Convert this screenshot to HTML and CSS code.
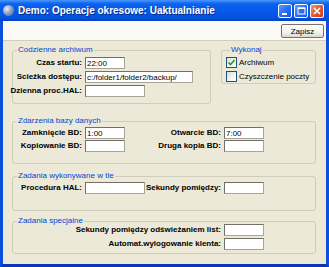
FILE: index.html
```html
<!DOCTYPE html>
<html lang="pl">

<head>
    <meta charset="UTF-8">
    <title>Demo: Operacje okresowe: Uaktualnianie</title>
    <link rel="stylesheet" href="styles.css">
</head>

<body>
    <div class="window">
        <div class="titlebar">
            <span class="app-icon"></span>
            <span class="title">Demo: Operacje okresowe: Uaktualnianie</span>
            <div class="controls">
                <span class="ctl">
                    <svg width="12" height="12" viewBox="0 0 12 12"><rect x="3" y="8" width="5" height="2" fill="#fff"/></svg>
                </span>
                <span class="ctl">
                    <svg width="12" height="12" viewBox="0 0 12 12"><rect x="3" y="3" width="7" height="6" fill="none" stroke="#fff" stroke-width="1"/><rect x="3" y="2.5" width="7" height="1.5" fill="#fff"/></svg>
                </span>
                <span class="ctl ctl-close">
                    <svg width="12" height="12" viewBox="0 0 12 12"><path d="M3 3 L9 9 M9 3 L3 9" stroke="#fff" stroke-width="1.6"/></svg>
                </span>
            </div>
        </div>

        <div class="frame">
            <div class="toolbar">
                <button class="btn">Zapisz</button>
            </div>

            <div class="panel">
                <div class="top-row">
                    <fieldset class="group group-daily">
                        <legend>Codzienne archiwum</legend>
                        <div class="fields cols-daily">
                            <label>Czas startu:</label>
                            <input class="w40" type="text" value="22:00">
                            <label>Scieżka dostępu:</label>
                            <input class="w108" type="text" value="c:/folder1/folder2/backup/">
                            <label>Dzienna proc.HAL:</label>
                            <input class="w60" type="text" value="">
                        </div>
                    </fieldset>

                    <fieldset class="group group-run">
                        <legend>Wykonaj</legend>
                        <div class="checks">
                            <div class="check-row">
                                <span class="box">
                                    <svg width="9" height="9" viewBox="0 0 9 9"><path d="M1.5 4.5 L3.5 6.5 L7.5 2" fill="none" stroke="#21a121" stroke-width="1.6"/></svg>
                                </span>
                                <span>Archiwum</span>
                            </div>
                            <div class="check-row">
                                <span class="box"></span>
                                <span>Czyszczenie poczty</span>
                            </div>
                        </div>
                    </fieldset>
                </div>

                <fieldset class="group group-db">
                    <legend>Zdarzenia bazy danych</legend>
                    <div class="fields cols-db">
                        <label>Zamknięcie BD:</label>
                        <input class="w40" type="text" value="1:00">
                        <label>Otwarcie BD:</label>
                        <input class="w40" type="text" value="7:00">
                        <label>Kopiowanie BD:</label>
                        <input class="w40" type="text" value="">
                        <label>Druga kopia BD:</label>
                        <input class="w40" type="text" value="">
                    </div>
                </fieldset>

                <fieldset class="group group-bg">
                    <legend>Zadania wykonywane w tle</legend>
                    <div class="fields cols-bg">
                        <label>Procedura HAL:</label>
                        <input class="w60" type="text" value="">
                        <label>Sekundy pomiędzy:</label>
                        <input class="w40" type="text" value="">
                    </div>
                </fieldset>

                <fieldset class="group group-special">
                    <legend>Zadania specjalne</legend>
                    <div class="fields cols-special">
                        <label>Sekundy pomiędzy odświeżaniem list:</label>
                        <input class="w40" type="text" value="">
                        <label>Automat.wylogowanie klenta:</label>
                        <input class="w40" type="text" value="">
                    </div>
                </fieldset>
            </div>
        </div>
    </div>
</body>

</html>
```

FILE: styles.css
```css
* {
    box-sizing: border-box;
    margin: 0;
    padding: 0;
}

body {
    width: 329px;
    height: 267px;
    overflow: hidden;
    font-family: "Liberation Sans", Arial, sans-serif;
    font-size: 8px;
    color: #000;
    background-color: #0a50dc;
}

.window {
    display: flex;
    flex-direction: column;
    height: 267px;
}

/* title bar */

.titlebar {
    height: 21px;
    display: flex;
    align-items: center;
    padding: 0 5px 0 3px;
    background: linear-gradient(#4a97fc 0%, #0b62ee 18%, #0558e8 55%, #0452df 85%, #0340c4 100%);
}

.app-icon {
    width: 11px;
    height: 11px;
    border-radius: 50%;
    background: radial-gradient(circle at 35% 35%, #e8eef8 0%, #8ea3c4 45%, #3d5a8c 100%);
}

.title {
    margin-left: 4px;
    color: #fff;
    font-weight: bold;
    font-size: 10px;
    white-space: nowrap;
    text-shadow: 1px 1px 0 #0b2a86;
}

.controls {
    margin-left: auto;
    display: flex;
    gap: 2px;
}

.ctl {
    width: 14px;
    height: 14px;
    display: flex;
    align-items: center;
    justify-content: center;
    border: 1px solid #fff;
    border-radius: 2px;
    background: linear-gradient(135deg, #5d9bff 0%, #2a6ef4 50%, #1657e0 100%);
}

.ctl-close {
    background: linear-gradient(135deg, #f29a79 0%, #e3592f 50%, #c8401c 100%);
}

/* frame */

.frame {
    flex: 1;
    display: flex;
    flex-direction: column;
    border: 3px solid #0a50dc;
    border-top: 0;
    border-bottom-color: #0838b8;
}

.toolbar {
    height: 20px;
    display: flex;
    justify-content: flex-end;
    padding: 3px 2px 0 0;
    background-color: #fbfaf6;
    border-bottom: 1px solid #d3cdb8;
}

.btn {
    width: 43px;
    height: 14px;
    font-family: "Liberation Sans", Arial, sans-serif;
    font-size: 8px;
    color: #000;
    border: 1px solid #74746c;
    border-radius: 2px;
    background: linear-gradient(#ffffff 0%, #f3f2ec 60%, #dcd8cc 100%);
}

.panel {
    flex: 1;
    padding: 4px 10px 0 9px;
    background-color: #ece9d8;
}

.top-row {
    display: flex;
    align-items: flex-start;
    gap: 10px;
    margin-bottom: 12px;
}

/* group boxes */

.group {
    min-width: 0;
    border: 1px solid #d0ccba;
    border-radius: 3px;
}

.group legend {
    margin-left: 4px;
    padding: 0 1px;
    line-height: 10px;
    color: #0046d5;
}

.group-daily {
    width: 199px;
    padding: 2px 0 6px 0;
}

.group-run {
    width: 95px;
    padding: 2px 0 0 4px;
}

.group-db {
    padding: 1px 0 11px 0;
    margin-bottom: 7px;
}

.group-bg {
    padding: 1px 0 16px 0;
    margin-bottom: 5px;
}

.group-special {
    padding: 0 0 3px 0;
}

.group-special .fields {
    margin-top: -2px;
}

/* fields */

.fields {
    display: grid;
    align-items: center;
    column-gap: 3px;
    row-gap: 2px;
}

.cols-daily {
    grid-template-columns: 69px auto;
}

.cols-db {
    grid-template-columns: 69px 40px 93px 40px;
    row-gap: 1px;
}

.cols-bg {
    grid-template-columns: 69px 60px 73px 40px;
}

.cols-special {
    grid-template-columns: 208px 40px;
}

.fields label {
    justify-self: end;
    white-space: nowrap;
    font-weight: bold;
    line-height: 12px;
}

input {
    height: 12px;
    padding: 0 1px;
    font-family: "Liberation Sans", Arial, sans-serif;
    font-size: 8px;
    color: #000;
    background-color: #fff;
    border: 1px solid #a8a597;
    border-top-color: #716f66;
    border-left-color: #716f66;
    outline: none;
}

.w40 {
    width: 40px;
}

.w60 {
    width: 60px;
}

.w108 {
    width: 108px;
}

/* checkboxes */

.checks {
    display: flex;
    flex-direction: column;
    gap: 2px;
}

.check-row {
    height: 12px;
    display: flex;
    align-items: flex-start;
    gap: 2px;
    line-height: 11px;
    white-space: nowrap;
}

.box {
    width: 11px;
    height: 11px;
    display: flex;
    align-items: center;
    justify-content: center;
    border: 1px solid #1c5180;
    background: linear-gradient(135deg, #dcdcd4 0%, #f4f4f0 60%, #ffffff 100%);
}
```
